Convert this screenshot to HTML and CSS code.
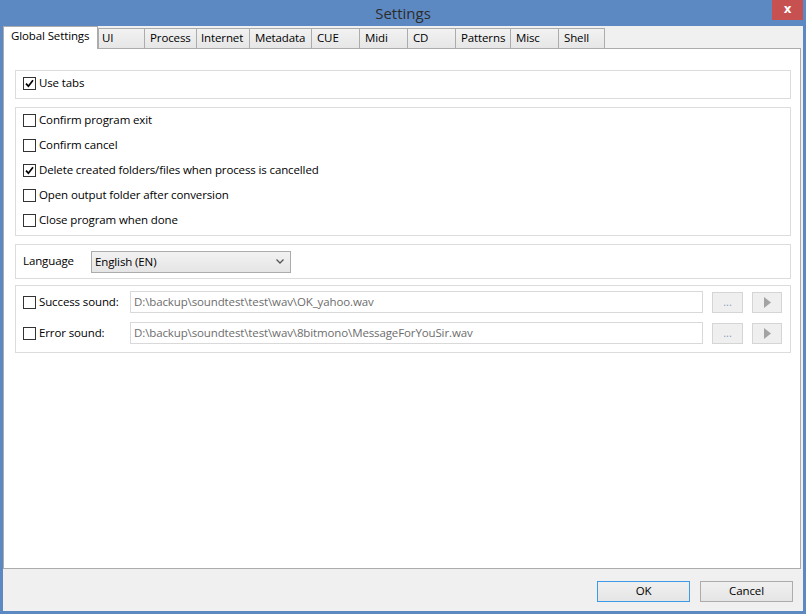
FILE: index.html
```html
<!DOCTYPE html>
<html lang="en">
<head>
    <meta charset="UTF-8">
    <title>Settings</title>
    <link rel="stylesheet" href="styles.css">
</head>
<body>

<div class="window">
    <div class="titlebar">
        <span class="title">Settings</span>
        <div class="close">x</div>
    </div>

    <div class="client">
        <!-- tab strip -->
        <div class="tabs">
            <div class="tab selected">Global Settings</div>
            <div class="tab w-ui">UI</div>
            <div class="tab w-process">Process</div>
            <div class="tab w-internet">Internet</div>
            <div class="tab w-metadata">Metadata</div>
            <div class="tab w-48">CUE</div>
            <div class="tab w-48">Midi</div>
            <div class="tab w-48">CD</div>
            <div class="tab w-patterns">Patterns</div>
            <div class="tab w-48">Misc</div>
            <div class="tab w-shell last">Shell</div>
        </div>

        <div class="panel">
            <div class="group group-tabs">
                <div class="check-row">
                    <span class="box checked"><svg width="9" height="9" viewBox="0 0 9 9"><path d="M1 4.6 L3.4 7.2 L8 1.2" fill="none" stroke="#000" stroke-width="1.7"/></svg></span>
                    <span>Use tabs</span>
                </div>
            </div>

            <div class="group group-confirm">
                <div class="check-row"><span class="box"></span><span>Confirm program exit</span></div>
                <div class="check-row"><span class="box"></span><span>Confirm cancel</span></div>
                <div class="check-row">
                    <span class="box checked"><svg width="9" height="9" viewBox="0 0 9 9"><path d="M1 4.6 L3.4 7.2 L8 1.2" fill="none" stroke="#000" stroke-width="1.7"/></svg></span>
                    <span>Delete created folders/files when process is cancelled</span>
                </div>
                <div class="check-row"><span class="box"></span><span>Open output folder after conversion</span></div>
                <div class="check-row"><span class="box"></span><span>Close program when done</span></div>
            </div>

            <div class="group group-lang">
                <span class="lang-label">Language</span>
                <div class="select">
                    <span>English (EN)</span>
                    <svg width="8" height="5" viewBox="0 0 8 5"><path d="M0.5 0.5 L4 4 L7.5 0.5" fill="none" stroke="#555" stroke-width="1.3"/></svg>
                </div>
            </div>

            <div class="group group-sound">
                <div class="sound-row">
                    <span class="box"></span>
                    <span class="sound-label">Success sound:</span>
                    <div class="path-input">D:\backup\soundtest\test\wav\OK_yahoo.wav</div>
                    <div class="small-btn browse">...</div>
                    <div class="small-btn play"><svg width="7" height="11" viewBox="0 0 7 11"><path d="M0 0 L7 5.5 L0 11 Z" fill="#a3a3a3"/></svg></div>
                </div>
                <div class="sound-row">
                    <span class="box"></span>
                    <span class="sound-label">Error sound:</span>
                    <div class="path-input">D:\backup\soundtest\test\wav\8bitmono\MessageForYouSir.wav</div>
                    <div class="small-btn browse">...</div>
                    <div class="small-btn play"><svg width="7" height="11" viewBox="0 0 7 11"><path d="M0 0 L7 5.5 L0 11 Z" fill="#a3a3a3"/></svg></div>
                </div>
            </div>
        </div>

        <div class="footer">
            <div class="button default">OK</div>
            <div class="button">Cancel</div>
        </div>
    </div>
</div>

</body>
</html>
```

FILE: styles.css
```css
/* dialog frame */
body {
    margin: 0;
    font-family: "Open Sans", "Noto Sans", sans-serif;
    font-size: 11.5px;
    letter-spacing: -0.12px;
    color: #000;
}

.window {
    width: 806px;
    height: 614px;
    box-sizing: border-box;
    padding: 0 3px 3px 3px;
    background-color: #5d89c3;
    display: flex;
    flex-direction: column;
}

.titlebar {
    height: 26px;
    position: relative;
    display: flex;
    align-items: center;
    justify-content: center;
}

.title {
    font-size: 15px;
    letter-spacing: 0;
    color: #2c2c2c;
    margin-top: -1px;
}

.close {
    position: absolute;
    top: 0;
    right: 0;
    width: 31px;
    height: 20px;
    background-color: #c75050;
    color: #fff;
    font-family: "DejaVu Sans", sans-serif;
    font-weight: bold;
    font-size: 12px;
    line-height: 19px;
    text-align: center;
}

.client {
    flex: 1;
    background-color: #f0f0f0;
    display: flex;
    flex-direction: column;
}

/* tabs */
.tabs {
    height: 22px;
    display: flex;
    align-items: flex-end;
    position: relative;
    z-index: 1;
}

.tab {
    height: 20px;
    box-sizing: border-box;
    border-left: 1px solid #acacac;
    border-top: 1px solid #acacac;
    background: linear-gradient(#f2f2f2, #e6e6e6);
    padding-left: 5px;
    line-height: 17px;
    white-space: nowrap;
}

.tab.selected {
    width: 95px;
    height: 23px;
    margin-bottom: -1px;
    border-right: 1px solid #acacac;
    background: #fff;
    padding-left: 7px;
    line-height: 18px;
}

.tab.last {
    border-right: 1px solid #acacac;
}

.w-ui { width: 46px; padding-left: 3px; }
.w-process { width: 52px; }
.w-internet { width: 53px; padding-left: 4px; }
.w-metadata { width: 62px; }
.w-48 { width: 48px; }
.w-patterns { width: 55px; }
.w-shell { width: 47px; }

/* page */
.panel {
    flex: 1;
    margin-right: 2px;
    background-color: #fff;
    border: 1px solid #acacac;
    padding: 21px 9px 0 11px;
}

.group {
    border: 1px solid #dcdcdc;
    padding: 0 7px;
}

.group-tabs {
    height: 27px;
    display: flex;
    align-items: center;
    margin-bottom: 8px;
}

.group-confirm {
    padding-bottom: 2px;
    margin-bottom: 8px;
}

.check-row {
    height: 25px;
    box-sizing: border-box;
    padding-bottom: 1px;
    display: flex;
    align-items: center;
}

.group-tabs .check-row {
    margin-top: -2px;
}

.check-row span:last-child {
    padding-bottom: 1px;
}

.box {
    width: 13px;
    height: 13px;
    box-sizing: border-box;
    border: 1px solid #333;
    background-color: #fff;
    margin-right: 3px;
    display: flex;
    align-items: center;
    justify-content: center;
    flex-shrink: 0;
}

.group-lang {
    height: 33px;
    display: flex;
    align-items: center;
    margin-bottom: 6px;
}

.lang-label {
    width: 68px;
    padding-bottom: 2px;
}

.select {
    width: 200px;
    height: 22px;
    box-sizing: border-box;
    border: 1px solid #acacac;
    background: linear-gradient(#f2f2f2, #e5e5e5);
    padding: 0 6px 1px 3px;
    display: flex;
    align-items: center;
    justify-content: space-between;
}

.group-sound {
    padding: 5px 8px 8px 7px;
}

.sound-row {
    height: 22px;
    display: flex;
    align-items: center;
}

.sound-row + .sound-row {
    margin-top: 9px;
}

.sound-label {
    width: 91px;
    padding-bottom: 1px;
}

.path-input {
    width: 573px;
    height: 22px;
    box-sizing: border-box;
    border: 1px solid #d9d9d9;
    color: #6d6d6d;
    padding-left: 3px;
    line-height: 19px;
    white-space: nowrap;
}

.small-btn {
    height: 21px;
    box-sizing: border-box;
    border: 1px solid #d5d5d5;
    background-color: #efefef;
    display: flex;
    align-items: center;
    justify-content: center;
    margin-left: 9px;
}

.browse {
    width: 31px;
    color: #8aa2bd;
    font-size: 11px;
    line-height: 16px;
}

.play {
    width: 30px;
}

/* bottom buttons */
.footer {
    height: 42px;
    box-sizing: border-box;
    padding: 12px 10px 0 0;
    display: flex;
    justify-content: flex-end;
    gap: 10px;
}

.button {
    width: 93px;
    height: 21px;
    box-sizing: border-box;
    border: 1px solid #acacac;
    background: linear-gradient(#f0f0f0, #e5e5e5);
    text-align: center;
    line-height: 18px;
}

.button.default {
    border-color: #3c9ae8;
}
```
